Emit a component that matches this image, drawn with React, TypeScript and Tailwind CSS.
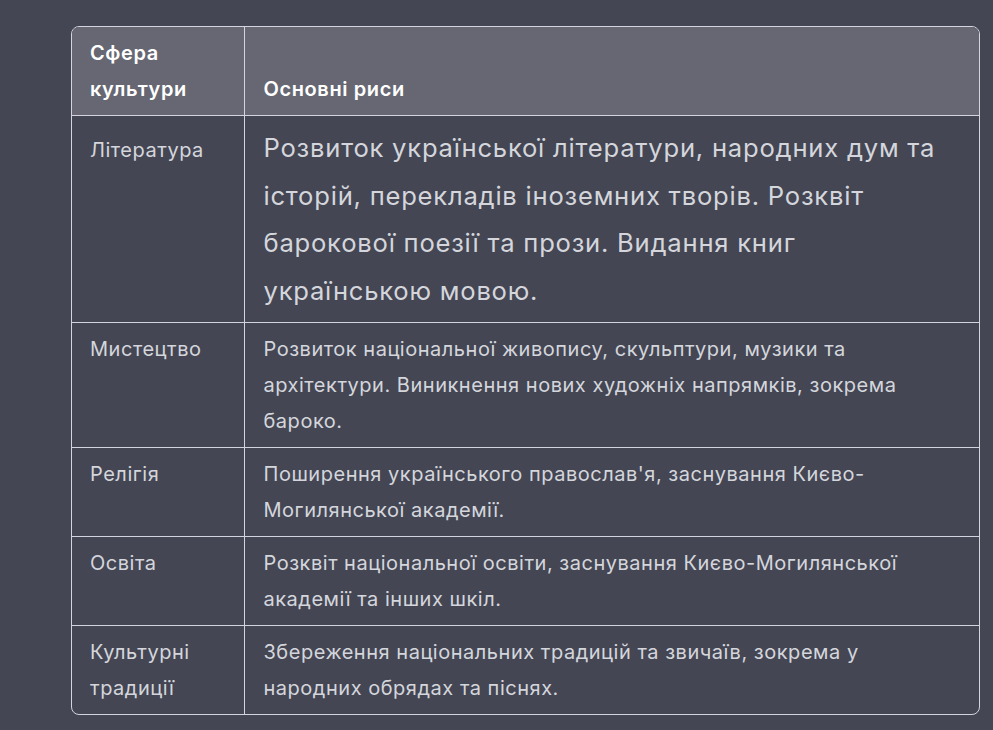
import React from "react";

// Table of Ukrainian culture areas, rendered in a dark chat-style surface.

const rows: { area: string; text: string; big?: boolean }[] = [
  {
    area: "Література",
    text: "Розвиток української літератури, народних дум та історій, перекладів іноземних творів. Розквіт барокової поезії та прози. Видання книг українською мовою.",
    big: true,
  },
  {
    area: "Мистецтво",
    text: "Розвиток національної живопису, скульптури, музики та архітектури. Виникнення нових художніх напрямків, зокрема бароко.",
  },
  {
    area: "Релігія",
    text: "Поширення українського православ'я, заснування Києво-Могилянської академії.",
  },
  {
    area: "Освіта",
    text: "Розквіт національної освіти, заснування Києво-Могилянської академії та інших шкіл.",
  },
  {
    area: "Культурні традиції",
    text: "Збереження національних традицій та звичаїв, зокрема у народних обрядах та піснях.",
  },
];

export default function App() {
  return (
    <div
      className="min-h-[730px] w-full bg-[#444654] pl-[71px] pr-[13px] pt-[26px] text-[#d4d6dc]"
      style={{ fontFamily: "Inter, 'Noto Sans', sans-serif" }}
    >
      <div className="w-[909px] overflow-hidden rounded-[8px] border border-[#d4d4de]">
        <table className="w-full border-collapse text-left text-[20px] leading-[36px] tracking-[0.026em]">
          <thead>
            <tr className="bg-[#666773]">
              <th className="w-[172px] border-r border-b border-[#d4d4de] px-[18px] py-[8px] align-bottom font-semibold tracking-[0.03em] text-white">
                Сфера культури
              </th>
              <th className="border-b border-[#d4d4de] pl-[19px] pr-[18px] py-[8px] align-bottom font-semibold tracking-[0.03em] text-white">
                Основні риси
              </th>
            </tr>
          </thead>
          <tbody>
            {rows.map((r, i) => {
              const last = i === rows.length - 1;
              return (
                <tr key={r.area}>
                  <td
                    className={`border-r border-[#d4d4de] px-[18px] py-[8px] align-baseline ${last ? "" : "border-b"}`}
                  >
                    {r.area}
                  </td>
                  <td
                    className={`border-[#d4d4de] pl-[19px] pr-[18px] py-[8px] align-baseline ${last ? "" : "border-b"} ${r.big ? "text-[25.6px] leading-[47.5px] tracking-[0.03em]" : ""}`}
                  >
                    {r.text}
                  </td>
                </tr>
              );
            })}
          </tbody>
        </table>
      </div>
    </div>
  );
}
